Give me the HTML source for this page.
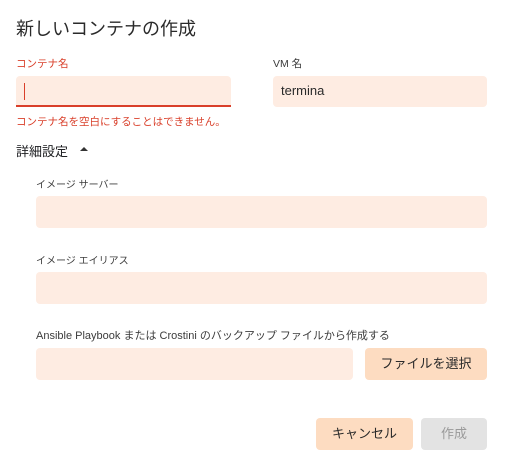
<!DOCTYPE html>
<html><head><meta charset="utf-8"><style>
*{margin:0;padding:0;box-sizing:border-box}
body{width:506px;height:465px;background:#fff;font-family:"Liberation Sans","Noto Sans CJK JP",sans-serif;color:#202124;position:relative;overflow:hidden}
.a{position:absolute;white-space:nowrap}
.in{position:absolute;background:#feece2;border-radius:4px}
.lbl{font-size:10.5px;color:#3c3c3c}
.btn{position:absolute;border-radius:4px;font-size:13px;display:flex;align-items:center;justify-content:center;padding-bottom:3px}
</style></head><body>
<div class="a" style="left:16px;top:15px;font-size:18px;color:#2a2a2a">新しいコンテナの作成</div>
<div class="a lbl" style="left:16px;top:56px;color:#d93f2a">コンテナ名</div>
<div class="in" style="left:16px;top:76px;width:215px;height:31px;border-bottom:2px solid #d93f2a;border-radius:4px 4px 0 0"></div>
<div class="a" style="left:24px;top:83px;width:1px;height:17px;background:#d93f2a"></div>
<div class="a lbl" style="left:273px;top:56px">VM 名</div>
<div class="in" style="left:273px;top:76px;width:214px;height:31px"></div>
<div class="a" style="left:281px;top:83px;font-size:13px;color:#2a2a2a">termina</div>
<div class="a" style="left:16px;top:114px;font-size:10.5px;color:#d93f2a">コンテナ名を空白にすることはできません。</div>
<div class="a" style="left:16px;top:141px;font-size:13px">詳細設定</div>
<div class="a" style="left:80px;top:147px;width:0;height:0;border-left:4px solid transparent;border-right:4px solid transparent;border-bottom:4px solid #333"></div>
<div class="a lbl" style="left:36px;top:176px;font-size:10px">イメージ サーバー</div>
<div class="in" style="left:36px;top:196px;width:451px;height:32px"></div>
<div class="a lbl" style="left:36px;top:252px;font-size:10px">イメージ エイリアス</div>
<div class="in" style="left:36px;top:272px;width:451px;height:32px"></div>
<div class="a lbl" style="left:36px;top:327px;font-size:11px">Ansible Playbook または Crostini のバックアップ ファイルから作成する</div>
<div class="in" style="left:36px;top:348px;width:317px;height:32px"></div>
<div class="btn" style="left:365px;top:348px;width:122px;height:32px;background:#fddcc1;color:#2a2a2a">ファイルを選択</div>
<div class="btn" style="left:316px;top:418px;width:97px;height:32px;background:#fddcc1;color:#2a2a2a">キャンセル</div>
<div class="btn" style="left:421px;top:418px;width:66px;height:32px;background:#e3e3e3;color:#9a9a9a">作成</div>
</body></html>
